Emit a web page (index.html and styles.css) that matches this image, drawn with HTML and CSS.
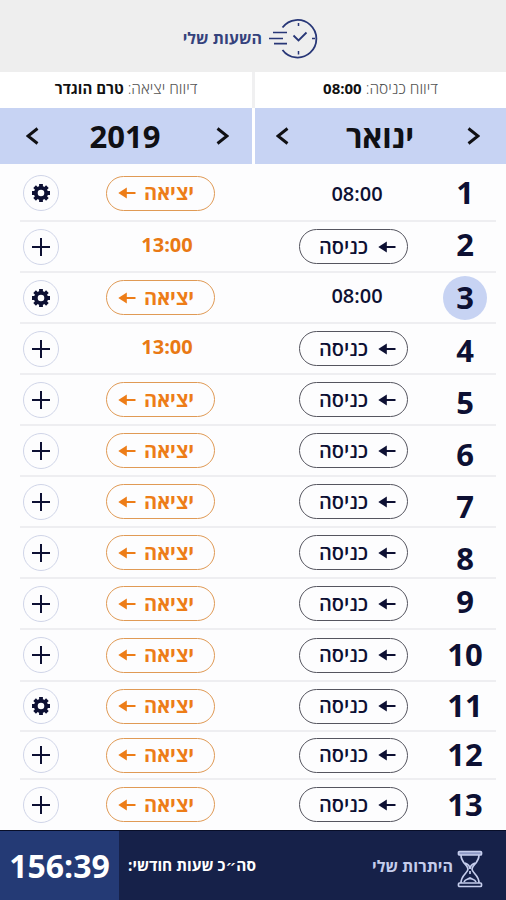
FILE: index.html
```
<!DOCTYPE html>
<html lang="he">
<head>
<meta charset="utf-8">
<title>השעות שלי</title>
<link rel="stylesheet" href="styles.css">
</head>
<body>
<svg class="defs" width="0" height="0" aria-hidden="true">
  <symbol id="arrow" viewBox="0 0 18 12"><path d="M7 6H17.5" stroke="currentColor" stroke-width="2"/><path d="M0.3 6L8.8 0.6V11.4Z" fill="currentColor"/></symbol>
  <symbol id="plus" viewBox="0 0 18 18"><path d="M0 9H18M9 0V18" stroke="currentColor" stroke-width="2"/></symbol>
  <symbol id="gear" viewBox="0 0 18 18"><g stroke="currentColor" stroke-width="3.8" fill="none"><path d="M9 0V4M9 14v4M0 9H4M14 9h4M2.600 2.600L5.500 5.500M12.500 12.500l2.900 2.900M15.400 2.600L12.500 5.500M5.500 12.500L2.600 15.400"/><circle cx="9" cy="9" r="5.200"/></g></symbol>
  <symbol id="next" viewBox="0 0 12 18"><path d="M1 1.500L10.500 9L1 16.500" fill="none" stroke="currentColor" stroke-width="2.900"/></symbol>
  <symbol id="prev" viewBox="0 0 12 18"><path d="M11 1.500L1.500 9L11 16.500" fill="none" stroke="currentColor" stroke-width="2.900"/></symbol>
</svg>
<div class="app">
  <header class="header">
    <h1 class="title" dir="rtl">השעות שלי</h1>
    <svg class="clock" viewBox="0 0 50 40" fill="none" stroke="#283777">
      <path d="M13.500 8.500A18.800 18.800 0 1 1 13.500 31" stroke-width="1.800"/>
      <path d="M4 13.500H18M0 19.500H14M5 24.700H18" stroke-width="1.700"/>
      <path d="M24.500 16.500L29.500 21.500L37.500 13.500" stroke-width="1.800"/>
      <path d="M29.500 4V7M29.500 32V35.500M43 19.500H46" stroke-width="1.500"/>
    </svg>
  </header>
  <div class="reports">
    <div class="report report-out" dir="rtl">דיווח יציאה: <b>טרם הוגדר</b></div>
    <div class="report report-in" dir="rtl">דיווח כניסה: <b>08:00</b></div>
  </div>
  <nav class="period">
    <div class="picker year"><svg class="chev"><use href="#prev"/></svg><span>2019</span><svg class="chev"><use href="#next"/></svg></div>
    <div class="picker month"><svg class="chev"><use href="#prev"/></svg><span>ינואר</span><svg class="chev"><use href="#next"/></svg></div>
  </nav>
  <main class="days">
    <div class="row first"><span class="round"><svg><use href="#gear"/></svg></span><span class="pill out"><svg><use href="#arrow"/></svg>יציאה</span><span class="time in">08:00</span><span class="day">1</span></div>
    <div class="row"><span class="round"><svg><use href="#plus"/></svg></span><span class="time out">13:00</span><span class="pill in">כניסה<svg><use href="#arrow"/></svg></span><span class="day up">2</span></div>
    <div class="row"><span class="round"><svg><use href="#gear"/></svg></span><span class="pill out"><svg><use href="#arrow"/></svg>יציאה</span><span class="time in">08:00</span><span class="day today">3</span></div>
    <div class="row"><span class="round"><svg><use href="#plus"/></svg></span><span class="time out">13:00</span><span class="pill in">כניסה<svg><use href="#arrow"/></svg></span><span class="day down">4</span></div>
    <div class="row"><span class="round"><svg><use href="#plus"/></svg></span><span class="pill out"><svg><use href="#arrow"/></svg>יציאה</span><span class="pill in">כניסה<svg><use href="#arrow"/></svg></span><span class="day down3">5</span></div>
    <div class="row"><span class="round"><svg><use href="#plus"/></svg></span><span class="pill out"><svg><use href="#arrow"/></svg>יציאה</span><span class="pill in">כניסה<svg><use href="#arrow"/></svg></span><span class="day down4">6</span></div>
    <div class="row"><span class="round"><svg><use href="#plus"/></svg></span><span class="pill out"><svg><use href="#arrow"/></svg>יציאה</span><span class="pill in">כניסה<svg><use href="#arrow"/></svg></span><span class="day down5">7</span></div>
    <div class="row"><span class="round"><svg><use href="#plus"/></svg></span><span class="pill out"><svg><use href="#arrow"/></svg>יציאה</span><span class="pill in">כניסה<svg><use href="#arrow"/></svg></span><span class="day down6">8</span></div>
    <div class="row"><span class="round"><svg><use href="#plus"/></svg></span><span class="pill out"><svg><use href="#arrow"/></svg>יציאה</span><span class="pill in">כניסה<svg><use href="#arrow"/></svg></span><span class="day up">9</span></div>
    <div class="row tall"><span class="round"><svg><use href="#plus"/></svg></span><span class="pill out"><svg><use href="#arrow"/></svg>יציאה</span><span class="pill in">כניסה<svg><use href="#arrow"/></svg></span><span class="day">10</span></div>
    <div class="row short"><span class="round"><svg><use href="#gear"/></svg></span><span class="pill out"><svg><use href="#arrow"/></svg>יציאה</span><span class="pill in">כניסה<svg><use href="#arrow"/></svg></span><span class="day">11</span></div>
    <div class="row shorter"><span class="round"><svg><use href="#plus"/></svg></span><span class="pill out"><svg><use href="#arrow"/></svg>יציאה</span><span class="pill in">כניסה<svg><use href="#arrow"/></svg></span><span class="day">12</span></div>
    <div class="row last"><span class="round"><svg><use href="#plus"/></svg></span><span class="pill out"><svg><use href="#arrow"/></svg>יציאה</span><span class="pill in">כניסה<svg><use href="#arrow"/></svg></span><span class="day">13</span></div>
  </main>
  <footer class="footer">
    <div class="total">156:39</div>
    <div class="total-label" dir="rtl">סה״כ שעות חודשי:</div>
    <div class="balance"><span dir="rtl">היתרות שלי</span>
      <svg class="glass" viewBox="0 0 25 38" fill="none" stroke="#c5cdec" stroke-width="1.700">
        <rect x="1" y="1.500" width="23" height="3.500" rx="1" fill="#8d98c4"/><rect x="1" y="33" width="23" height="3.500" rx="1"/>
        <path d="M3.500 5C3.500 13 10.500 15 10.500 19S3.500 25 3.500 33M21.500 5C21.500 13 14.500 15 14.500 19S21.500 25 21.500 33M7.500 13Q12.500 15 12.500 19Q12.500 15 17.500 13M12.500 21V24M6.500 32C8 28.500 10 30 12.500 28C15 30 17 28.500 18.500 32"/>
      </svg>
    </div>
  </footer>
</div>
</body>
</html>
```
FILE: styles.css
```
* { box-sizing: border-box; }
body { margin: 0; font-family: "Open Sans", "Noto Sans", "DejaVu Sans", sans-serif; color: #0d1033; background: #fdfdfe; }
svg { display: block; flex: none; }
.defs { position: absolute; }
.app { width: 506px; height: 900px; display: flex; flex-direction: column; overflow: hidden; }
.header { height: 72px; background: #eee; display: flex; align-items: center; padding: 5px 0 0 184px; gap: 7px; }
.title { margin: 0; width: 78px; padding-bottom: 2px; font-size: 16px; line-height: 22px; font-weight: 700; color: #35427c; white-space: nowrap; }
.clock { width: 50px; height: 40px; }
.reports { display: grid; grid-template-columns: 252px 251px; gap: 3px; height: 36px; background: #f0f0f1; }
.report { background: #fff; display: flex; justify-content: center; gap: 4px; font-size: 15.500px; line-height: 32px; font-weight: 300; color: #555; white-space: nowrap; }
.report b { font-weight: 700; color: #111; font-size: 15px; }
.report-in { font-size: 15.500px; }
.period { display: grid; grid-template-columns: 252px 251px; gap: 3px; height: 56px; background: #fff; }
.picker { background: #c7d3f3; display: flex; align-items: center; justify-content: space-between; padding: 0 23px 0 26px; font-size: 31px; line-height: 50px; font-weight: 700; color: #101014; }
.year span { padding-right: 5px; }
.month { padding: 0 26px 0 21px; }
.month span { padding-left: 4px; }
.chev { width: 13px; height: 18px; }
.days { height: 666px; padding: 2px 10px 0 20px; }
.row { height: 51px; display: grid; grid-template-columns: 86px 109px 84px 109px 26px 62px; align-items: center; border-bottom: 2px solid #eeeef1; }
.first { height: 56px; }
.tall { height: 52px; }
.short { height: 50px; }
.shorter { height: 48px; }
.last { height: 49px; border-bottom: 0; }
.round { width: 36px; height: 36px; margin-left: 3px; border: 1.500px solid #d0d5e8; border-radius: 50%; display: grid; place-items: center; }
.round svg { width: 18px; height: 18px; }
.pill { height: 35px; border: 1px solid #55555f; border-radius: 18px; display: flex; align-items: center; font-size: 20px; line-height: 30px; font-weight: 600; white-space: nowrap; }
.pill svg { width: 18px; height: 12px; }
.pill.out { grid-column: 2; border-color: #e09a55; color: #ed7d18; padding-left: 11px; gap: 8px; font-weight: 700; }
.pill.in { grid-column: 4; padding-left: 19px; gap: 10px; }
.time { font-size: 20px; line-height: 28px; font-weight: 600; text-align: center; }
.time.out { grid-column: 2; color: #e97914; font-weight: 700; padding: 0 0 4px 13px; }
.time.in { grid-column: 4; padding: 0 0 2px 7px; }
.row:not(.first) .time.in { padding-bottom: 4px; }
.first .time.in { padding: 2px 0 0 7px; }
.day { grid-column: 6; height: 44px; font-size: 31px; line-height: 42px; font-weight: 700; text-align: center; }
.up { line-height: 39px; }
.down { line-height: 47px; }
.down3 { line-height: 49px; }
.down4 { line-height: 51px; }
.down5 { line-height: 53px; }
.down6 { line-height: 55px; }
.today { width: 44px; height: 44px; border-radius: 50%; background: #c7d3f3; justify-self: center; }
.footer { height: 70px; background: #162149; color: #fff; display: flex; align-items: center; border-top: 1px solid #080e28; }
.total { width: 119px; height: 100%; background: #243a75; font-size: 32px; line-height: 70px; font-weight: 700; text-align: center; }
.total-label { margin-left: 9px; width: 128px; font-size: 15.400px; line-height: 24px; font-weight: 700; white-space: nowrap; }
.balance { margin-left: auto; padding-right: 23px; display: flex; align-items: center; gap: 4px; font-size: 16px; font-weight: 700; line-height: 24px; color: #c5cdec; white-space: nowrap; }
.glass { width: 26px; height: 38px; margin-top: 6px; }
```
